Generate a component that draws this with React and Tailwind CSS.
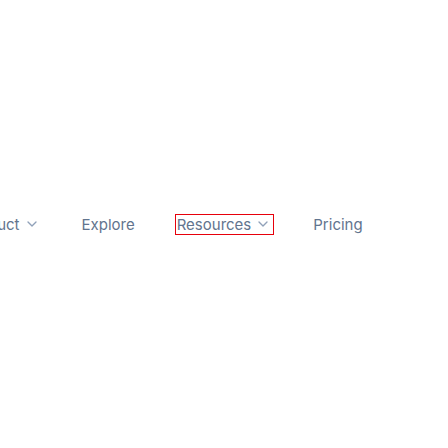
import { ChevronDown } from 'lucide-react'

const items = [
  { label: 'Product', menu: true },
  { label: 'Explore' },
  { label: 'Resources', menu: true, focused: true },
  { label: 'Pricing' },
]

const App = () => {
  return (
    <div className="h-screen w-full overflow-hidden bg-white flex items-center font-['Inter',sans-serif]">
      <nav className="flex items-center gap-[37px] ml-[-38px] shrink-0">
        {items.map((item) => (
          <button
            key={item.label}
            className={`flex items-center gap-1 h-[21px] pl-[1px] pr-[2px] text-[15px] leading-none text-slate-500 whitespace-nowrap border ${
              item.focused ? 'border-red-600' : 'border-transparent'
            }`}
          >
            <span>{item.label}</span>
            {item.menu && <ChevronDown className="w-4 h-4 text-slate-400" strokeWidth={2} />}
          </button>
        ))}
      </nav>
    </div>
  )
}

export default App
